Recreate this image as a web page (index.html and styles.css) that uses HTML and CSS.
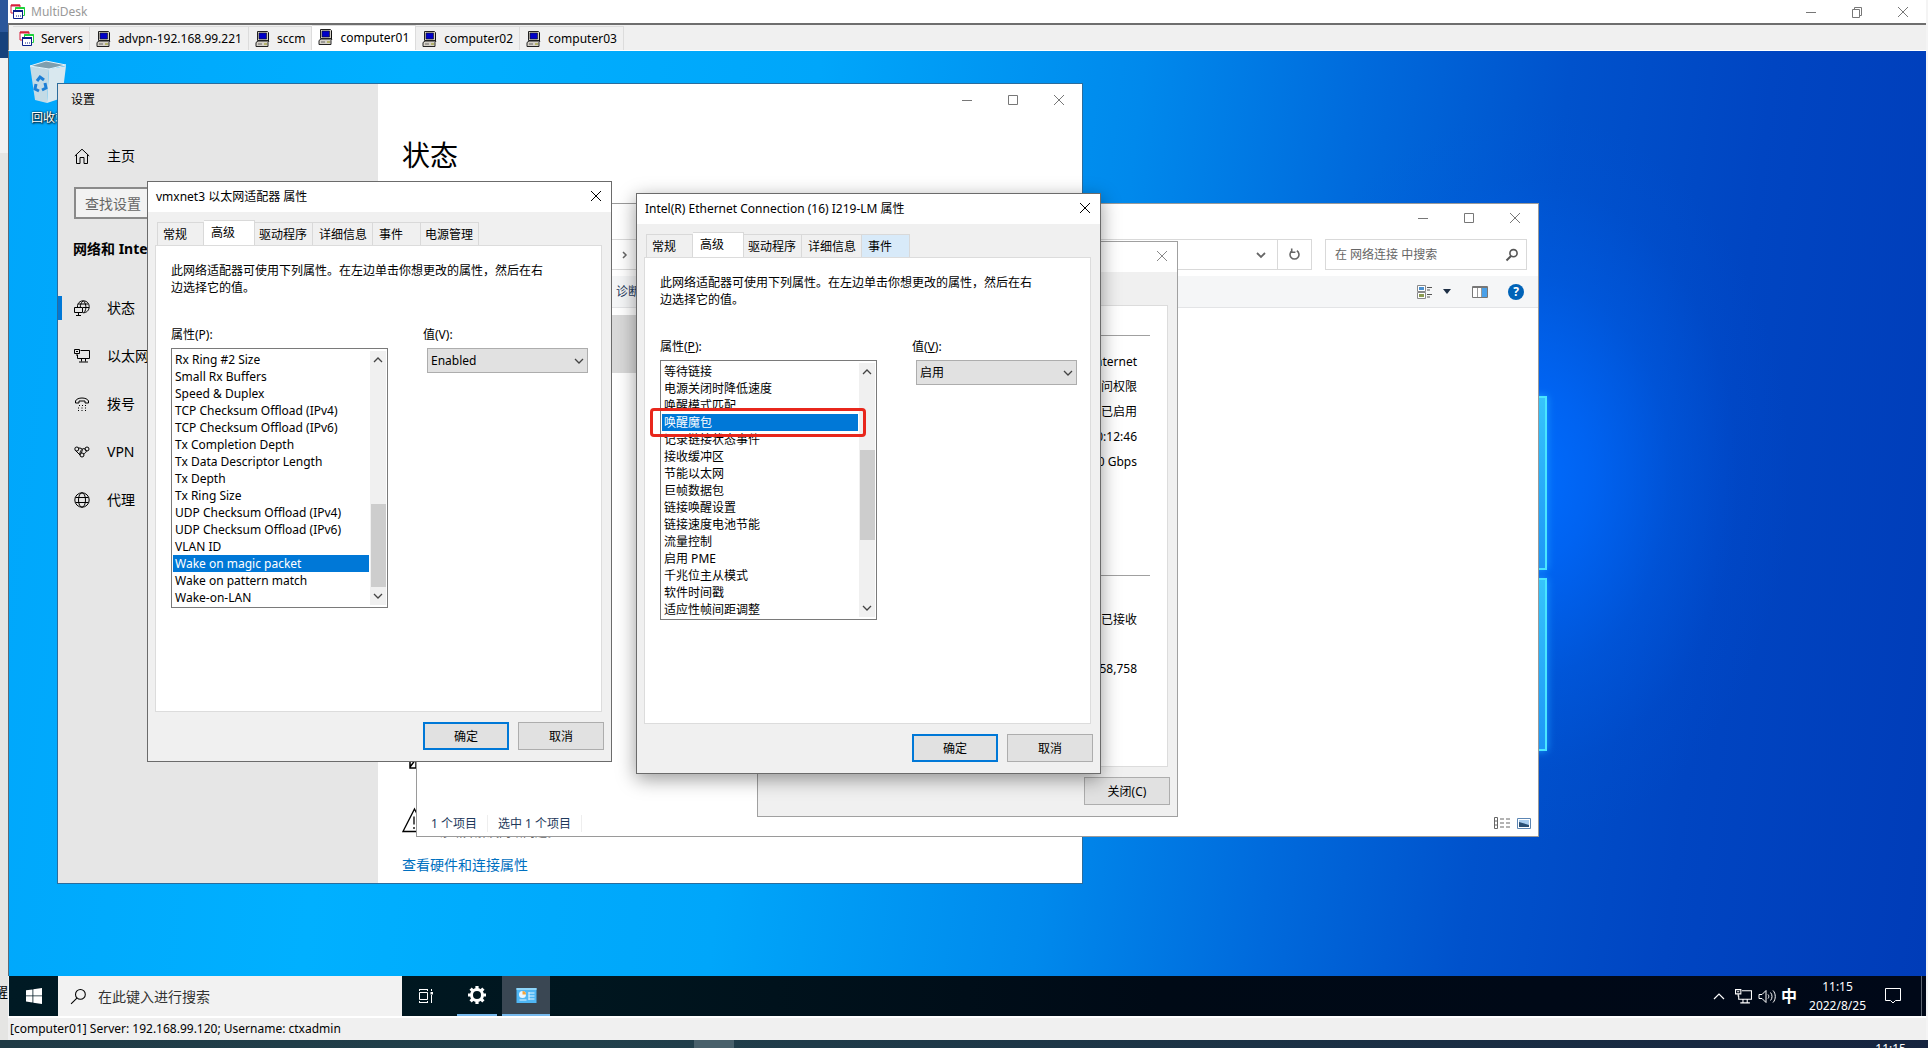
FILE: index.html
```html
<!DOCTYPE html>
<html lang="zh-CN">
<head>
<meta charset="utf-8">
<title>MultiDesk</title>
<link rel="stylesheet" href="styles.css">
</head>
<body>
<svg class="defs" aria-hidden="true">
  <symbol id="i-close" viewBox="0 0 12 12"><path d="M1 1l10 10M11 1L1 11" fill="none" stroke="currentColor"/></symbol>
  <symbol id="i-min" viewBox="0 0 12 12"><path d="M1 6.5h10" fill="none" stroke="currentColor"/></symbol>
  <symbol id="i-max" viewBox="0 0 12 12"><path d="M1.5 1.5h9v9h-9z" fill="none" stroke="currentColor"/></symbol>
  <symbol id="i-restore" viewBox="0 0 12 12"><path d="M1.5 3.5h7v8h-7zM3.5 3V1.500h7v8H9" fill="none" stroke="currentColor"/></symbol>
  <symbol id="i-down" viewBox="0 0 10 10"><path d="M1 3l4 4 4-4" fill="none" stroke="currentColor" stroke-width="1.300"/></symbol>
  <symbol id="i-up" viewBox="0 0 10 10"><path d="M1 7l4-4 4 4" fill="none" stroke="currentColor" stroke-width="1.300"/></symbol>
  <symbol id="i-servers" viewBox="0 0 16 16"><g fill="#fff"><path d="M1 1h9v8H1z" stroke="#d8203c"/><path d="M1 1.500h9" stroke="#d8203c" stroke-width="2"/><path d="M5.500 3.500h9v8h-9z" stroke="#1fd03c"/><path d="M5.500 4h9" stroke="#1fd03c" stroke-width="2"/><path d="M3.500 6.500h9v8h-9z" stroke="#0a1e8c"/><path d="M3 7h10" stroke="#0a1e8c" stroke-width="2"/></g><path d="M6 12h1M8 12h1M10 12h1" stroke="#0a1e8c"/></symbol>
  <symbol id="i-pc" viewBox="0 0 16 16"><path d="M2.500 .5h10l1 1v8h-11z" fill="#d4d0c8" stroke="#222"/><path d="M4 2h7.500v6H4z" fill="#0000c8" stroke="#111" stroke-width=".6"/><path d="M13.500 2v8" stroke="#111"/><path d="M1 11.500l2-1.500h11l-1 1.500v4H1z" fill="#d4d0c8" stroke="#222"/><path d="M3 13h4" stroke="#666"/><path d="M9 13h3" stroke="#a9a94c" stroke-width="1.500"/></symbol>
  <symbol id="i-search" viewBox="0 0 16 16"><circle cx="9.800" cy="6" r="4.600" fill="none" stroke="currentColor"/><path d="M6.500 9.500L1 15" stroke="currentColor"/></symbol>
  <symbol id="i-net" viewBox="0 0 16 14"><path d="M6.500 1.500h9v8H3.500V6M7.500 10v2.500M11.500 10v2.500M5 13h9M.5.5h5v4h-5zM3 4.500V7M2 2.500h2" fill="none" stroke="currentColor"/></symbol>
</svg>

<div class="screen">
  <aside class="behind"><span>醒</span></aside>

  <main class="app">
    <header class="app-title">
      <svg class="ico16"><use href="#i-servers"/></svg>
      <span class="app-name">MultiDesk</span>
      <button aria-label="最小化"><svg><use href="#i-min"/></svg></button>
      <button aria-label="还原"><svg><use href="#i-restore"/></svg></button>
      <button aria-label="关闭"><svg><use href="#i-close"/></svg></button>
    </header>

    <nav class="app-tabs">
      <button><svg class="ico16"><use href="#i-servers"/></svg>Servers</button>
      <button><svg class="ico16"><use href="#i-pc"/></svg>advpn-192.168.99.221</button>
      <button><svg class="ico16"><use href="#i-pc"/></svg>sccm</button>
      <button class="active"><svg class="ico16"><use href="#i-pc"/></svg>computer01</button>
      <button><svg class="ico16"><use href="#i-pc"/></svg>computer02</button>
      <button><svg class="ico16"><use href="#i-pc"/></svg>computer03</button>
    </nav>

    <section class="desktop">
      <div class="pane pane-top"></div>
      <div class="pane pane-bottom"></div>
      <div class="bin">
        <svg viewBox="0 0 40 44"><path d="M1 6l19 3-2 34-12-3z" fill="#c3dbe6"/><path d="M20 9l17-3-4 32-15 5z" fill="#d9e8ef"/><path d="M1 6l16-5 20 4-17 4z" fill="#7f9fae" stroke="#e6f4fa"/><g fill="none" stroke="#1c7fd6" stroke-width="3"><path d="M8 21l3-4 4 3"/><path d="M16 23l1 5-4 2"/><path d="M10 31l-4-2 1-5"/></g></svg>
        <span>回收站</span>
      </div>

      <section class="window settings">
        <div class="side">
          <div class="side-title">设置</div>
          <a href="#home" class="item home"><svg viewBox="0 0 16 16"><path d="M.8 8L8 1.200 15.200 8M2.500 6.500v9h3.500V9.500h4v6h3.500v-9" fill="none" stroke="currentColor"/></svg>主页</a>
          <input class="find" type="text" placeholder="查找设置" aria-label="查找设置">
          <h2>网络和 Internet</h2>
          <a href="#status" class="item current"><svg viewBox="0 0 16 16"><g fill="none" stroke="currentColor"><path d="M3.500 7.500C2.500-1 15-1.500 15.200 6.500 15.200 10.500 12.500 12.800 9 12.800M4.200 4h10M9 7.500h6.200M9 .8C6.800 3 6.300 5 6.300 7.500M9.500.8c3 3.500 3 8 .8 11.800"/><path d="M.5 7.500h8v5h-8zM4.500 13v2M2 15.500h5"/></g></svg>状态</a>
          <a href="#ethernet" class="item"><svg viewBox="0 0 16 14"><use href="#i-net"/></svg>以太网</a>
          <a href="#dialup" class="item"><svg viewBox="0 0 16 16"><path d="M1.500 7V5C3 1 13 1 14.500 5v2h-3.500V5H5v2z" fill="none" stroke="currentColor"/><path d="M5 9.500h1M8 9.500h1M11 9.500h1M4 12h1M7.500 12h1M11 12h1M4 14.500h1M7.500 14.500h1M11 14.500h1" stroke="currentColor"/></svg>拨号</a>
          <a href="#vpn" class="item"><svg viewBox="0 0 16 16"><g fill="none" stroke="currentColor"><circle cx="2.800" cy="5" r="2"/><circle cx="13" cy="5" r="2"/><circle cx="8" cy="11" r="2"/><path d="M4.500 4C9 4 9 6 7 9M9.500 10c4-2 3-4 1.500-5-3-2-6 4-5 6M1.500 6.500L6 11"/></g></svg>VPN</a>
          <a href="#proxy" class="item"><svg viewBox="0 0 16 16"><g fill="none" stroke="currentColor"><circle cx="8" cy="8" r="7.200"/><ellipse cx="8" cy="8" rx="3.500" ry="7.200"/><path d="M1.500 5.500h13M1.500 10.500h13"/></g></svg>代理</a>
        </div>
        <div class="content">
          <div class="caption">
            <button aria-label="最小化"><svg><use href="#i-min"/></svg></button>
            <button aria-label="最大化"><svg><use href="#i-max"/></svg></button>
            <button aria-label="关闭"><svg><use href="#i-close"/></svg></button>
          </div>
          <h1>状态</h1>
          <div class="tip"><svg viewBox="0 0 26 26"><path d="M1 15h7v8h6M8 22l6-8v9" fill="none" stroke="#000" stroke-width="1.500"/></svg></div>
          <div class="tip"><svg viewBox="0 0 26 26"><path d="M12.500 2L24 24.500H1z" fill="none" stroke="#000" stroke-width="1.300"/><path d="M12 9.500v8M12 20v2" stroke="#000" stroke-width="1.300"/></svg><span>诊断并解决网络问题。</span></div>
          <a href="#hardware" class="hw">查看硬件和连接属性</a>
        </div>
      </section>

      <section class="window explorer">
        <div class="caption">
          <button aria-label="最小化"><svg><use href="#i-min"/></svg></button>
          <button aria-label="最大化"><svg><use href="#i-max"/></svg></button>
          <button aria-label="关闭"><svg><use href="#i-close"/></svg></button>
        </div>
        <div class="address-row">
          <div class="address"><span class="crumb"><svg viewBox="0 0 10 10"><path d="M3 2l3 3-3 3" fill="none" stroke="currentColor" stroke-width="1.500"/></svg></span>
            <svg class="chev" viewBox="0 0 10 10"><path d="M1 3l4 4 4-4" fill="none" stroke="currentColor" stroke-width="1.800"/></svg>
            <button aria-label="刷新"><svg viewBox="0 0 14 14"><path d="M4.500 3A4.800 4.800 0 1 0 9.500 3M4 .5v4h4" fill="none" stroke="currentColor" stroke-width="1.700"/></svg></button>
          </div>
          <div class="searchbox"><input type="text" placeholder="在 网络连接 中搜索" aria-label="搜索"><svg viewBox="0 0 14 14"><circle cx="8.500" cy="5.200" r="3.600" fill="none" stroke="currentColor" stroke-width="1.600"/><path d="M6 8l-4.500 4.500" stroke="currentColor" stroke-width="2"/></svg></div>
        </div>
        <div class="toolbar">
          <button class="cmd">诊断这个连接</button>
          <svg class="t-view" viewBox="0 0 16 16"><path d="M.5 1.500h8v6h-8zM.5 8.500h8v6h-8z" fill="#fff" stroke="#888"/><path d="M2 3h5v3H2z" fill="#4a90d0"/><path d="M2 10h5v3H2z" fill="#8a9a50"/><path d="M10 3.500h5M10 6h3M10 10.500h5M10 13h3" stroke="#555"/></svg>
          <svg class="t-arrow" viewBox="0 0 8 5"><path d="M0 0h8L4 5z" fill="#1e2f45"/></svg>
          <svg class="t-panel" viewBox="0 0 16 12"><path d="M.5.500h15v11H.5z" fill="#fff" stroke="#777"/><path d="M1 1.500h14" stroke="#777"/><path d="M10 2h5v9h-5z" fill="#4aa0e8"/><path d="M5.500 2v9M9.500 2v9" stroke="#999"/></svg>
          <button class="help" aria-label="帮助">?</button>
        </div>
        <div class="files"><div class="file"></div></div>
        <footer>
          <span>1 个项目</span><span>选中 1 个项目</span>
          <svg class="f1" viewBox="0 0 16 12"><path d="M.5.500h3v11h-3zM.5 4h3M.5 8h3M6 2h4M12 2h4M6 6h4M12 6h4M6 10h4M12 10h4" fill="none" stroke="#666"/></svg>
          <svg class="f2" viewBox="0 0 14 11"><path d="M.5.500h13v10H.5z" fill="#fff" stroke="#5c86b4"/><path d="M2 2h10v7H2z" fill="#a8cdf0"/><path d="M2 4l10 3v2H2z" fill="#2a4f74"/></svg>
        </footer>
      </section>

      <section class="window status">
        <div class="dlg-title"><span></span><button aria-label="关闭"><svg><use href="#i-close"/></svg></button></div>
        <div class="status-panel">
          <hr>
          <ul><li>Internet</li><li>无网络访问权限</li><li>已启用</li><li>00:12:46</li><li>1.0 Gbps</li></ul>
          <hr>
          <p>已接收</p>
          <p>58,758</p>
        </div>
        <div class="dlg-buttons"><button>关闭(C)</button></div>
      </section>

      <section class="window dialog first">
        <div class="dlg-title"><span>vmxnet3 以太网适配器 属性</span><button aria-label="关闭"><svg><use href="#i-close"/></svg></button></div>
        <div class="dlg-tabs" role="tablist">
          <button role="tab" class="w1">常规</button><button role="tab" class="on">高级</button><button role="tab" class="w3">驱动程序</button><button role="tab" class="w4">详细信息</button><button role="tab" class="w2">事件</button><button role="tab" class="w3">电源管理</button>
        </div>
        <div class="dlg-panel">
          <p>此网络适配器可使用下列属性。在左边单击你想更改的属性，然后在右边选择它的值。</p>
          <div class="fields">
            <div class="prop">
              <span class="label" id="p1">属性(P):</span>
              <div class="listbox">
                <ul role="listbox" aria-labelledby="p1">
                  <li role="option">Rx Ring #2 Size</li><li role="option">Small Rx Buffers</li><li role="option">Speed &amp; Duplex</li><li role="option">TCP Checksum Offload (IPv4)</li><li role="option">TCP Checksum Offload (IPv6)</li><li role="option">Tx Completion Depth</li><li role="option">Tx Data Descriptor Length</li><li role="option">Tx Depth</li><li role="option">Tx Ring Size</li><li role="option">UDP Checksum Offload (IPv4)</li><li role="option">UDP Checksum Offload (IPv6)</li><li role="option">VLAN ID</li><li role="option" class="sel" aria-selected="true">Wake on magic packet</li><li role="option">Wake on pattern match</li><li role="option">Wake-on-LAN</li>
                </ul>
                <div class="bar low"><svg><use href="#i-up"/></svg><i></i><svg><use href="#i-down"/></svg></div>
              </div>
            </div>
            <div class="value">
              <label class="label" for="v1">值(V):</label>
              <div class="select"><select id="v1"><option>Enabled</option></select><svg><use href="#i-down"/></svg></div>
            </div>
          </div>
        </div>
        <div class="dlg-buttons"><button class="default">确定</button><button>取消</button></div>
      </section>

      <section class="window dialog second">
        <div class="dlg-title"><span>Intel(R) Ethernet Connection (16) I219-LM 属性</span><button aria-label="关闭"><svg><use href="#i-close"/></svg></button></div>
        <div class="dlg-tabs" role="tablist">
          <button role="tab" class="w1">常规</button><button role="tab" class="on">高级</button><button role="tab" class="w3">驱动程序</button><button role="tab" class="w4">详细信息</button><button role="tab" class="w2 hot">事件</button>
        </div>
        <div class="dlg-panel">
          <p>此网络适配器可使用下列属性。在左边单击你想更改的属性，然后在右边选择它的值。</p>
          <div class="fields">
            <div class="prop">
              <span class="label" id="p2">属性(<u>P</u>):</span>
              <div class="listbox">
                <ul role="listbox" aria-labelledby="p2">
                  <li role="option">等待链接</li><li role="option">电源关闭时降低速度</li><li role="option">唤醒模式匹配</li><li role="option" class="sel" aria-selected="true">唤醒魔包</li><li role="option">记录链接状态事件</li><li role="option">接收缓冲区</li><li role="option">节能以太网</li><li role="option">巨帧数据包</li><li role="option">链接唤醒设置</li><li role="option">链接速度电池节能</li><li role="option">流量控制</li><li role="option">启用 PME</li><li role="option">千兆位主从模式</li><li role="option">软件时间戳</li><li role="option">适应性帧间距调整</li>
                </ul>
                <div class="bar mid"><svg><use href="#i-up"/></svg><i></i><svg><use href="#i-down"/></svg></div>
                <div class="mark"></div>
              </div>
            </div>
            <div class="value">
              <label class="label" for="v2">值(<u>V</u>):</label>
              <div class="select"><select id="v2"><option>启用</option></select><svg><use href="#i-down"/></svg></div>
            </div>
          </div>
        </div>
        <div class="dlg-buttons"><button class="default">确定</button><button>取消</button></div>
      </section>
    </section>

    <footer class="taskbar">
      <button class="start" aria-label="开始"><svg viewBox="0 0 16 16"><path d="M0 2.300l6.500-.9v6.100H0zM7.300 1.300L16 0v7.500H7.300zM0 8.300h6.500v6.200L0 13.600zM7.300 8.300H16V16l-8.700-1.300z" fill="#fff"/></svg></button>
      <label class="task-search"><svg><use href="#i-search"/></svg><input type="text" placeholder="在此键入进行搜索"></label>
      <button class="t-task" aria-label="任务视图"><svg viewBox="0 0 16 16"><path d="M1 1.500h9M1 14.500h9M1.500 4.500h8v7h-8zM1.500 1v2M9.500 1v2M1.500 13v2M9.500 13v2M13.500 1v2M13.500 7v8" fill="none" stroke="#fff"/><path d="M12.500 4h2.500v2.500h-2.500z" fill="#fff"/></svg></button>
      <button class="t-gear" aria-label="设置"><svg viewBox="0 0 20 20"><circle cx="10" cy="10" r="5.500" fill="none" stroke="#fff" stroke-width="3"/><path d="M10 1v3M10 16v3M1 10h3M16 10h3M3.600 3.600l2.200 2.200M14.200 14.200l2.200 2.200M3.600 16.400l2.200-2.200M14.200 5.800l2.200-2.200" stroke="#fff" stroke-width="3.200"/></svg></button>
      <button class="t-cpl" aria-label="控制面板"><svg viewBox="0 0 20 15"><path d="M0 0h20v15H0z" fill="#4fb6f4"/><path d="M0 0h20v2H0z" fill="#8fd6fb"/><circle cx="6" cy="6.500" r="3.500" fill="#e8f6ff"/><path d="M6 6.500V3a3.500 3.500 0 0 1 3.500 3.500z" fill="#f2a33c"/><path d="M12 5h6M12 8h6M12 11h6M3 12h7M12.500 4v8" stroke="#dff3ff"/></svg></button>
      <div class="tray">
        <svg class="c" viewBox="0 0 12 12"><path d="M1 9l5-5 5 5" fill="none" stroke="currentColor" stroke-width="1.200"/></svg>
        <svg class="n" viewBox="0 0 16 14"><use href="#i-net"/></svg>
        <svg class="v" viewBox="0 0 18 14"><path d="M1 5h3l4-4v12L4 9H1zM10 5c1 1 1 3 0 4M12.500 3c2 2 2 6 0 8M15 1c3 3 3 9 0 12" fill="none" stroke="currentColor"/></svg>
        <span class="ime">中</span>
        <time>11:15<br>2022/8/25</time>
        <svg class="a" viewBox="0 0 16 16"><path d="M.5.500h15v12h-5L8 15l-2.500-2.500h-5z" fill="none" stroke="currentColor"/></svg>
      </div>
    </footer>

    <footer class="app-status">[computer01] Server: 192.168.99.120; Username: ctxadmin</footer>
  </main>

  <div class="edge"></div>
  <div class="host-bar"><i></i><span>11:15</span></div>
</div>
</body>
</html>
```
FILE: styles.css
```css
* { box-sizing: border-box; }
body { margin: 0; font: 12px/17px "Noto Sans", "Noto Sans CJK SC", sans-serif; color: #000; overflow: hidden; }
button, input, select { font: inherit; color: inherit; margin: 0; padding: 0; border: 0; background: none; border-radius: 0; }
ul, p, h1, h2, hr { margin: 0; padding: 0; }
ul { list-style: none; }
svg { display: block; flex: none; }
.defs { position: absolute; width: 0; height: 0; }
.ico16 { width: 16px; height: 16px; }

.screen { display: grid; grid-template-columns: 8px 1fr 2px; grid-template-rows: 1fr 8px; height: 100vh; }
.behind { display: flex; align-items: flex-end; justify-content: flex-end; overflow: hidden; padding-bottom: 40px; font-size: 14px; background: linear-gradient(#2b579a 32px, #17427c 32px 58px, #f1f1f1 58px 153px, #e5e5e3 153px); }
.edge { background: #f4f4f4; }
.host-bar { grid-column: 1 / -1; display: flex; align-items: flex-start; overflow: hidden; color: #fff; background: linear-gradient(90deg, #1f3a45, #21404b 30%, #16243f); }
.host-bar i { width: 40px; height: 8px; margin-left: 694px; background: #48606b; }
.host-bar span { margin: 0 22px 0 auto; }

.app { display: flex; flex-direction: column; min-width: 0; background: #f0f0f0; }
.app-title { display: flex; align-items: center; height: 23px; background: #fff; color: #999; padding-left: 2px; }
.app-name { margin: 0 auto 0 5px; }
.app-title button, .caption button { display: flex; align-items: center; justify-content: center; width: 46px; height: 22px; color: #777; }
.app-title button svg, .caption svg, .dlg-title svg { width: 12px; height: 12px; }
.app-tabs { display: flex; align-items: flex-end; height: 28px; padding: 0 4px; border-top: 2px solid #6e6e6e; border-left: 1px solid #777; border-bottom: 1px solid #fff; background: #f0f0f0; }
.app-tabs button { display: flex; align-items: center; gap: 6px; height: 24px; padding: 0 6px; border: 1px solid #dcdcdc; border-left: 0; border-bottom: 0; }
.app-tabs button.active { height: 25px; background: #fff; padding-bottom: 2px; }

.desktop { position: relative; flex: 1; min-height: 0; overflow: hidden; border-left: 1px solid #5a6a78;
  background:
    radial-gradient(ellipse 14% 40% at 79% 46%, #006cff 0, rgba(0, 106, 255, .75) 25%, rgba(0, 100, 245, .35) 55%, rgba(0, 90, 230, .1) 80%, rgba(0, 90, 230, 0) 100%),
    linear-gradient(97deg, #00a6fb 0, #00b0ff 20%, #00a6fa 40%, #0089ec 56%, #006adc 67%, #0052cc 77%, #0045c2 87%, #003cb8 100%); }
.pane { position: absolute; left: 1500px; width: 38px; background: linear-gradient(#36c4fb, #1d96f6); border: 2px solid #4ae6ff; box-shadow: 0 0 8px #1d9cff; }
.pane-top { top: 345px; height: 174px; }
.pane-bottom { top: 527px; height: 173px; }
.bin { position: absolute; left: 19px; top: 9px; width: 42px; display: flex; flex-direction: column; align-items: center; gap: 5px; color: #fff; text-shadow: 1px 1px 2px #000, 0 0 2px #000; white-space: nowrap; }
.bin svg { width: 40px; height: 44px; }

.window { position: absolute; display: flex; background: #fff; border: 1px solid #8c8c8c; }
.caption { display: flex; justify-content: flex-end; }

.settings { left: 48px; top: 32px; width: 1026px; height: 801px; border-color: #2b6c9c; font-size: 14px; line-height: 20px; }
.side { width: 320px; background: #e6e6e6; display: flex; flex-direction: column; }
.side-title { height: 32px; padding: 6px 13px; font-size: 12px; }
.item { display: flex; align-items: center; gap: 17px; height: 48px; padding-left: 16px; color: #000; text-decoration: none; }
.item svg { width: 16px; height: 16px; }
.home { margin: 16px 0 7px; }
.current { position: relative; }
.current::before { content: ""; position: absolute; left: 0; width: 4px; height: 24px; background: #0078d7; }
.find { height: 32px; margin: 0 16px; padding: 0 9px; border: 2px solid #8a8a8a; background: #f2f2f2; }
.find::placeholder { color: #666; opacity: 1; }
.side h2 { font-size: 14px; line-height: 24px; margin: 18px 15px 23px; }
.content { flex: 1; display: flex; flex-direction: column; padding: 0 0 8px 24px; }
.settings .caption button { height: 31px; }
h1 { font-size: 28px; line-height: 40px; font-weight: 400; margin: 20px 0 auto; }
.tip { display: flex; align-items: flex-start; gap: 11px; height: 62px; }
.tip svg { width: 26px; height: 26px; }
.tip span { font-size: 12px; color: #666; padding-top: 16px; }
.tip + .hw { margin-top: -14px; }
.hw { color: #0070c0; text-decoration: none; }

.explorer { left: 407px; top: 152px; width: 1123px; height: 634px; flex-direction: column; border-color: #9a9a9a; }
.explorer .caption { height: 35px; padding-top: 3px; }
.address-row { display: flex; gap: 13px; padding: 0 11px 0 120px; height: 31px; }
.address { flex: 1; display: flex; align-items: stretch; border: 1px solid #d9d9d9; }
.crumb { display: flex; align-items: center; margin: 0 auto 0 82px; }
.address svg { width: 10px; height: 10px; color: #666; align-self: center; }
.address .chev { margin-right: 11px; }
.address button { display: flex; justify-content: center; width: 34px; border-left: 1px solid #d9d9d9; }
.address button svg { width: 13px; height: 13px; }
.searchbox { display: flex; align-items: center; width: 202px; border: 1px solid #d9d9d9; padding: 0 7px 0 9px; }
.searchbox input { flex: 1; min-width: 0; }
.searchbox input::placeholder { color: #666; opacity: 1; }
.searchbox svg { width: 14px; height: 14px; color: #555; }
.toolbar { display: flex; align-items: center; height: 32px; margin-top: 6px; padding: 0 14px 0 199px; background: #f5f6f7; border-bottom: 1px solid #e3e4e6; }
.cmd { color: #1e395b; margin-right: auto; }
.t-view { width: 16px; height: 16px; }
.t-arrow { width: 8px; height: 5px; margin: 0 21px 0 10px; }
.t-panel { width: 16px; height: 12px; }
.help { width: 16px; height: 16px; margin-left: 20px; border-radius: 50%; background: #0063b8; color: #fff; font-weight: 700; line-height: 16px; }
.files { flex: 1; padding: 7px 0 0 14px; }
.file { width: 260px; height: 58px; background: #d9d9d9; }
.explorer footer { display: flex; align-items: center; height: 26px; padding: 0 7px 0 14px; color: #1e395b; }
.explorer footer span { padding-right: 10px; margin-right: 10px; border-right: 1px solid #eee; }
.f1 { width: 16px; height: 12px; margin: 0 7px 0 auto; }
.f2 { width: 14px; height: 11px; }

.dialog, .status { flex-direction: column; background: #f0f0f0; }
.dlg-title { display: flex; align-items: center; justify-content: space-between; height: 30px; background: #fff; padding: 0 9px 2px 8px; }
.dlg-title svg { color: #000; }
.status { left: 748px; top: 190px; width: 421px; height: 576px; border-color: #a0a0a0; }
.status .dlg-title svg { color: #888; }
.status-panel { flex: 1; margin: 33px 9px 0 8px; padding: 29px 17px 0; background: #fff; border: 1px solid #dcdcdc; text-align: right; }
.status-panel hr { border: 0; border-top: 1px solid #a0a0a0; }
.status-panel ul { padding: 13px 13px 101px 0; line-height: 25px; }
.status-panel p { padding: 35px 13px 0 0; }
.status-panel p + p { padding-top: 32px; }
.dlg-buttons { display: flex; justify-content: flex-end; gap: 9px; padding: 10px 7px 11px; }
.dlg-buttons button { width: 86px; height: 28px; background: #e1e1e1; border: 1px solid #adadad; }
.dlg-buttons .default { border: 2px solid #0078d7; }
.dialog { width: 465px; height: 581px; border-color: #6b6b6b; }
.first { left: 138px; top: 130px; }
.second { left: 627px; top: 142px; box-shadow: 0 5px 18px rgba(0, 0, 0, .4); }
.dlg-tabs { display: flex; align-items: flex-end; padding: 9px 0 0 9px; height: 33px; }
.dlg-tabs button { height: 23px; border: 1px solid #d9d9d9; border-left: 0; border-bottom: 0; text-align: left; padding-left: 6px; }
.dlg-tabs .w1 { width: 47px; padding-left: 5px; border-left: 1px solid #d9d9d9; }
.dlg-tabs .on { width: 51px; height: 26px; margin-bottom: -1px; padding: 0 0 3px 7px; background: #fff; }
.dlg-tabs .w2 { width: 48px; }
.dlg-tabs .w3 { width: 58px; padding-left: 4px; }
.dlg-tabs .w4 { width: 60px; }
.dlg-tabs .hot { background: #d8eaf9; }
.dlg-panel { flex: 1; margin: 0 9px 0 7px; padding: 16px 12px 0 15px; background: #fff; border: 1px solid #dcdcdc; }
.dlg-panel p { width: 375px; margin-bottom: 30px; line-height: 17px; }
.fields { display: flex; justify-content: space-between; }
.label { display: block; margin-bottom: 5px; }
.prop { width: 217px; }
.value { width: 166px; }
.listbox { position: relative; display: flex; height: 260px; border: 1px solid #7a7a7a; padding: 2px 1px; background: #fff; }
.listbox ul { flex: 1; }
.listbox li { height: 17px; padding-left: 2px; margin-right: 1px; white-space: nowrap; }
.listbox .sel { background: #0078d7; color: #fff; }
.bar { display: flex; flex-direction: column; justify-content: space-between; align-items: center; width: 16px; background: #f0f0f0; color: #444; }
.bar svg { width: 10px; height: 10px; margin: 4px 0; }
.bar i { width: 15px; background: #cdcdcd; }
.low i { height: 83px; margin-top: auto; }
.mid i { height: 90px; margin-top: 10px; }
.mark { position: absolute; left: -11px; top: 47px; width: 216px; height: 29px; border: 3px solid #e8271c; border-radius: 4px; }
.select { position: relative; display: flex; align-items: center; width: 161px; margin-left: 4px; }
.select select { width: 100%; height: 25px; padding-left: 3px; appearance: none; background: #e1e1e1; border: 1px solid #adadad; }
.select svg { position: absolute; right: 4px; width: 10px; height: 10px; color: #444; pointer-events: none; }

.taskbar { display: flex; align-items: stretch; height: 40px; margin-left: 1px; color: #fff; background: linear-gradient(90deg, #001a24, #00161f 30%, #000a16 60%, #000818); }
.taskbar button { display: flex; align-items: center; justify-content: center; }
.start { width: 49px; }
.start svg, .t-task svg { width: 16px; height: 16px; }
.task-search { display: flex; align-items: center; gap: 11px; width: 344px; padding-left: 12px; background: #f2f2f2; color: #000; font-size: 14px; }
.task-search svg { width: 17px; height: 17px; }
.task-search input { flex: 1; }
.task-search input::placeholder { color: #333; opacity: 1; }
.t-task { width: 48px; margin-right: 7px; }
.t-gear { width: 40px; border-bottom: 2px solid #76b9ed; }
.t-gear svg { width: 20px; height: 20px; }
.taskbar .t-cpl { width: 48px; margin-left: 5px; background: #3a4753; border-bottom: 2px solid #76b9ed; }
.t-cpl svg { width: 21px; height: 15px; }
.tray { display: flex; align-items: center; margin-left: auto; padding-right: 20px; margin-right: 4px; border-right: 1px solid #5c6470; }
.c { width: 12px; height: 12px; margin-right: 10px; }
.n { width: 17px; height: 15px; margin-right: 6px; }
.v { width: 18px; height: 15px; margin-right: 5px; }
.ime { font-size: 16px; font-weight: 700; }
time { margin: 0 19px 0 12px; text-align: center; line-height: 19px; }
.a { width: 16px; height: 16px; }
.app-status { height: 24px; padding: 2px 2px 3px; border-top: 2px solid #fff; background: #f0f0f0; }
```
